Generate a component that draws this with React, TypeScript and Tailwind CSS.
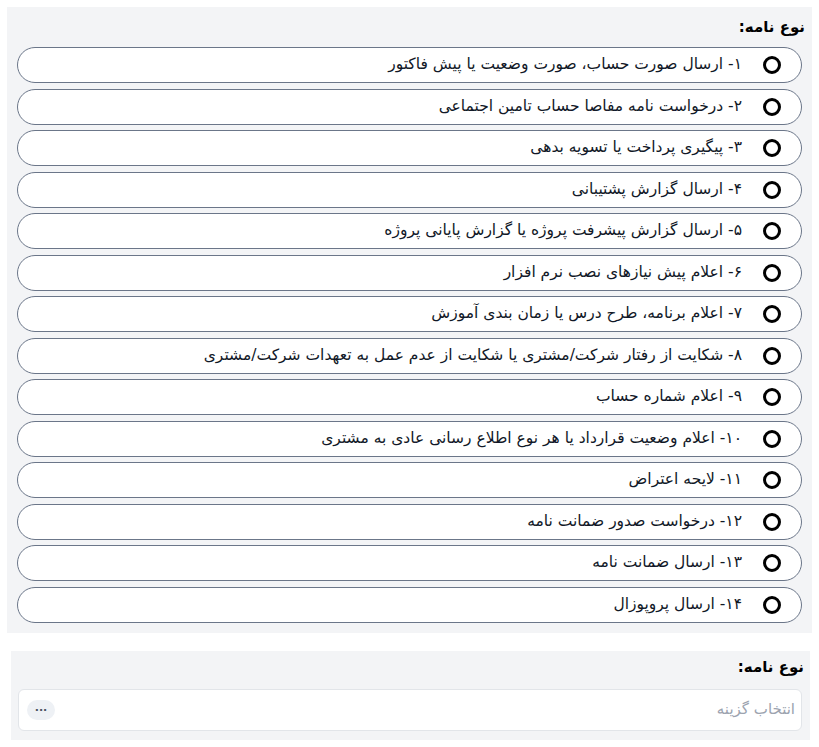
import { useState } from 'react';

const LETTER_TYPES = [
  '۱- ارسال صورت حساب، صورت وضعیت یا پیش فاکتور',
  '۲- درخواست نامه مفاصا حساب تامین اجتماعی',
  '۳- پیگیری پرداخت یا تسویه بدهی',
  '۴- ارسال گزارش پشتیبانی',
  '۵- ارسال گزارش پیشرفت پروژه یا گزارش پایانی پروژه',
  '۶- اعلام پیش نیازهای نصب نرم افزار',
  '۷- اعلام برنامه، طرح درس یا زمان بندی آموزش',
  '۸- شکایت از رفتار شرکت/مشتری یا شکایت از عدم عمل به تعهدات شرکت/مشتری',
  '۹- اعلام شماره حساب',
  '۱۰- اعلام وضعیت قرارداد یا هر نوع اطلاع رسانی عادی به مشتری',
  '۱۱- لایحه اعتراض',
  '۱۲- درخواست صدور ضمانت نامه',
  '۱۳- ارسال ضمانت نامه',
  '۱۴- ارسال پروپوزال',
];

export default function App() {
  const [selected, setSelected] = useState<number | null>(null);

  return (
    <div
      dir="rtl"
      className="w-[819px] min-h-[747px] bg-white text-gray-900"
      style={{ fontFamily: '"DejaVu Sans", "Liberation Sans", sans-serif' }}
    >
      <div className="pt-[7px] pr-[7px] pl-[7px]">
        <section className="bg-[#f3f4f6] pt-[10px] pb-[10px] px-[10px]">
          <h2 className="text-[15px] font-bold leading-[20px] mr-[-3px] mb-[10px] text-black">نوع نامه:</h2>
          <div className="flex flex-col gap-[5.5px]">
            {LETTER_TYPES.map((label, i) => (
              <button
                key={i}
                onClick={() => setSelected(i)}
                className="flex items-center h-[36px] w-full rounded-full bg-white border-[1.5px] border-[#6b7689] pr-[20px] pl-4 text-right"
              >
                <span className="w-[18px] h-[18px] rounded-full border-[3px] border-black flex items-center justify-center shrink-0">
                  {selected === i && <span className="w-[6px] h-[6px] rounded-full bg-black" />}
                </span>
                <span className="mr-[21px] text-[15.5px] leading-none text-[#111827]">{label}</span>
              </button>
            ))}
          </div>
        </section>
      </div>

      <div className="pt-[18px] pr-[9px] pl-[11px]">
        <section className="bg-[#f3f4f6] pt-[6px] pb-[9px] pr-[8px] pl-[7px]">
          <h2 className="text-[15px] font-bold leading-[20px] mr-[-2px] mb-[12px] text-black">نوع نامه:</h2>
          <div className="flex items-center justify-between h-[42px] rounded-md border border-[#e2e5e9] bg-white pr-[6px] pl-[8px]">
            <span className="text-[15px] text-[#9ca3af]">انتخاب گزینه</span>
            <span className="h-[20px] w-[28px] rounded-full bg-[#eef1f5] flex items-center justify-center text-[11px] font-bold text-[#4b5563] leading-none pb-[4px]">...</span>
          </div>
        </section>
      </div>
    </div>
  );
}
